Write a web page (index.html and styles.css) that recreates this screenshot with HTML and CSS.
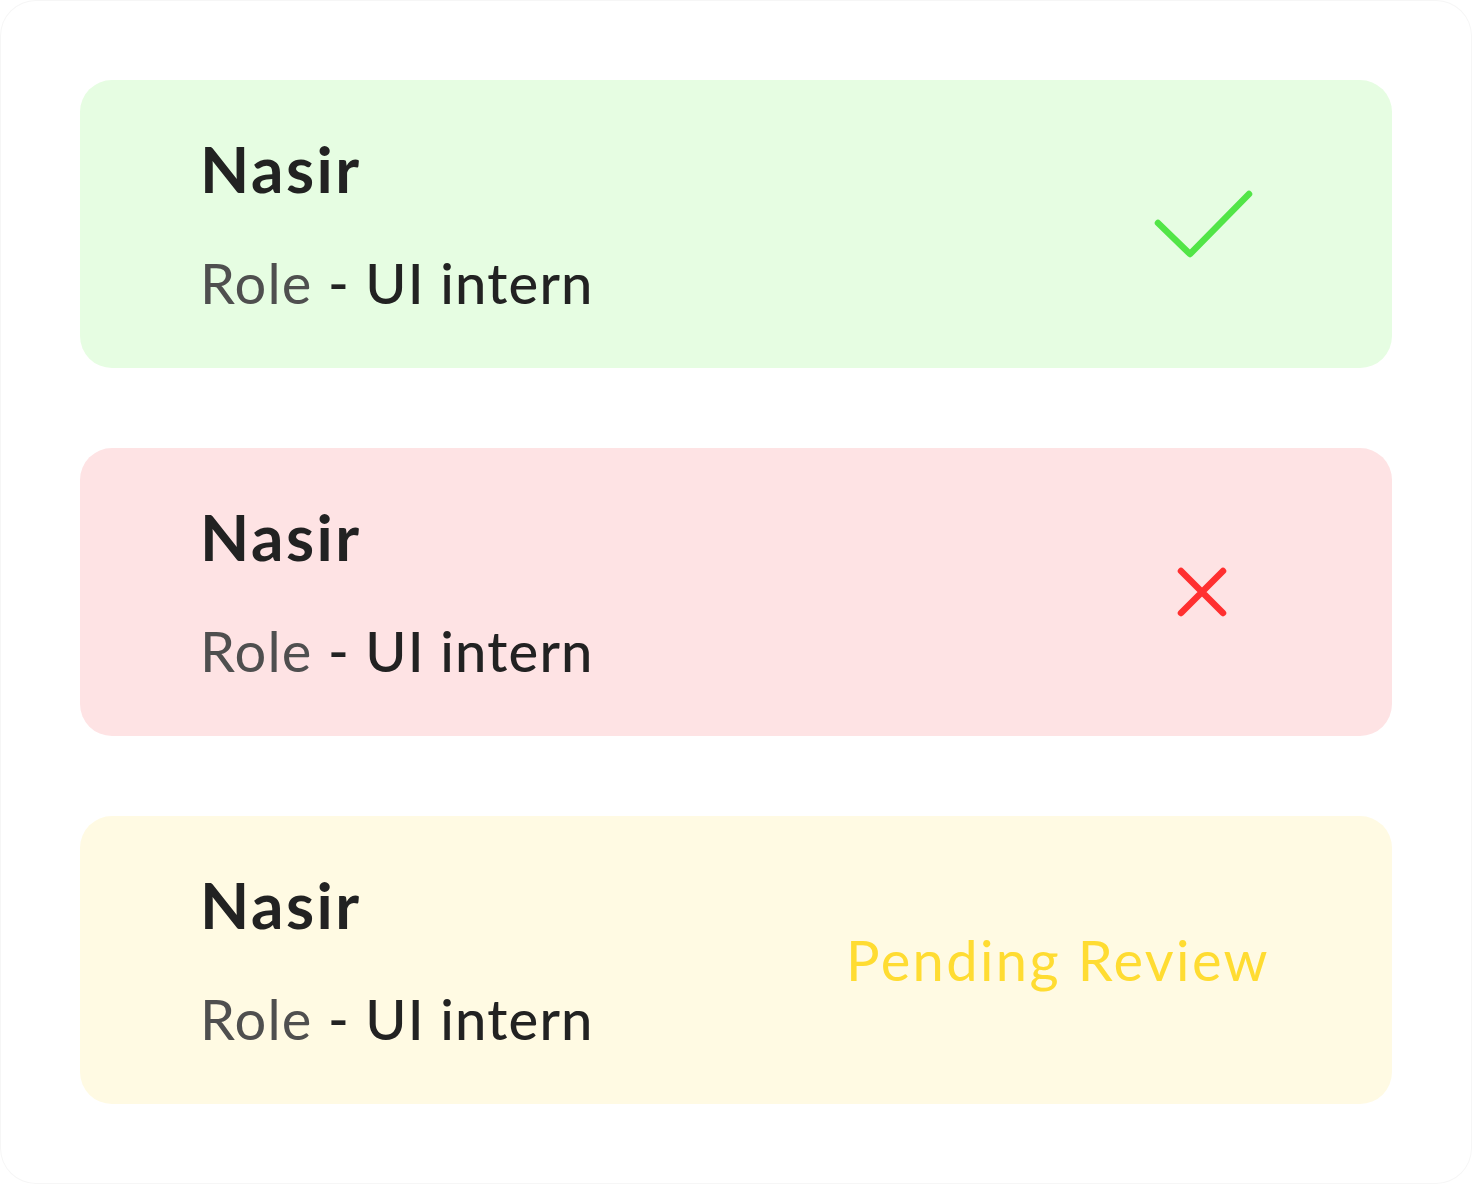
FILE: index.html
```html
<!DOCTYPE html>
<html lang="en">
<head>
<meta charset="utf-8">
<title>Applicants</title>
<link rel="stylesheet" href="styles.css">
</head>
<body>
<main class="panel">
  <section class="card card--approved">
    <div class="info">
      <h2 class="name">Nasir</h2>
      <p class="role"><span class="role-label">Role</span> - UI intern</p>
    </div>
    <svg class="status-icon status-icon--check" width="104" height="72" viewBox="0 0 104 72" aria-label="Approved">
      <polyline points="6,35 38,66 97,6" fill="none" stroke="#52e547" stroke-width="6.5" stroke-linecap="round" stroke-linejoin="round"/>
    </svg>
  </section>
  <section class="card card--rejected">
    <div class="info">
      <h2 class="name">Nasir</h2>
      <p class="role"><span class="role-label">Role</span> - UI intern</p>
    </div>
    <svg class="status-icon status-icon--cross" width="60" height="60" viewBox="0 0 60 60" aria-label="Rejected">
      <path d="M9 9 L51 51 M51 9 L9 51" fill="none" stroke="#ff3030" stroke-width="6.5" stroke-linecap="round"/>
    </svg>
  </section>
  <section class="card card--pending">
    <div class="info">
      <h2 class="name">Nasir</h2>
      <p class="role"><span class="role-label">Role</span> - UI intern</p>
    </div>
    <span class="status-text">Pending Review</span>
  </section>
</main>
</body>
</html>
```

FILE: styles.css
```css
* { box-sizing: border-box; }
html, body {
  margin: 0;
  padding: 0;
  background: #ffffff;
}
body {
  font-family: "Lato", "Noto Sans", sans-serif;
  color: #222222;
}
.panel {
  width: 1472px;
  height: 1184px;
  padding: 80px;
  display: flex;
  flex-direction: column;
  gap: 80px;
  border-radius: 36px;
  box-shadow: inset 0 0 0 1px #f6f6f6;
  background: #ffffff;
}
.card {
  height: 288px;
  flex: 0 0 288px;
  border-radius: 32px;
  padding: 0 124px 0 120px;
  display: flex;
  align-items: center;
  justify-content: space-between;
}
.card--approved { background: #e6fde2; }
.card--rejected { background: #fee3e4; }
.card--pending { background: #fffae3; }
.info {
  display: flex;
  flex-direction: column;
  gap: 54px;
}
.name {
  margin: 0;
  font-size: 64px;
  line-height: 64px;
  font-weight: 700;
  letter-spacing: 2.5px;
  color: #222222;
}
.role {
  margin: 0;
  font-size: 56px;
  line-height: 56px;
  font-weight: 500;
  letter-spacing: 1.2px;
  color: #222222;
}
.role-label {
  color: #4f4f4f;
  font-weight: 400;
}
.status-icon { display: block; flex: none; }
.status-icon--check { margin-right: 12px; }
.status-icon--cross { margin-right: 36px; }
.status-text {
  font-size: 56px;
  line-height: 56px;
  letter-spacing: 2.4px;
  margin-right: -2px;
  color: #ffdc32;
  font-weight: 400;
}
```
